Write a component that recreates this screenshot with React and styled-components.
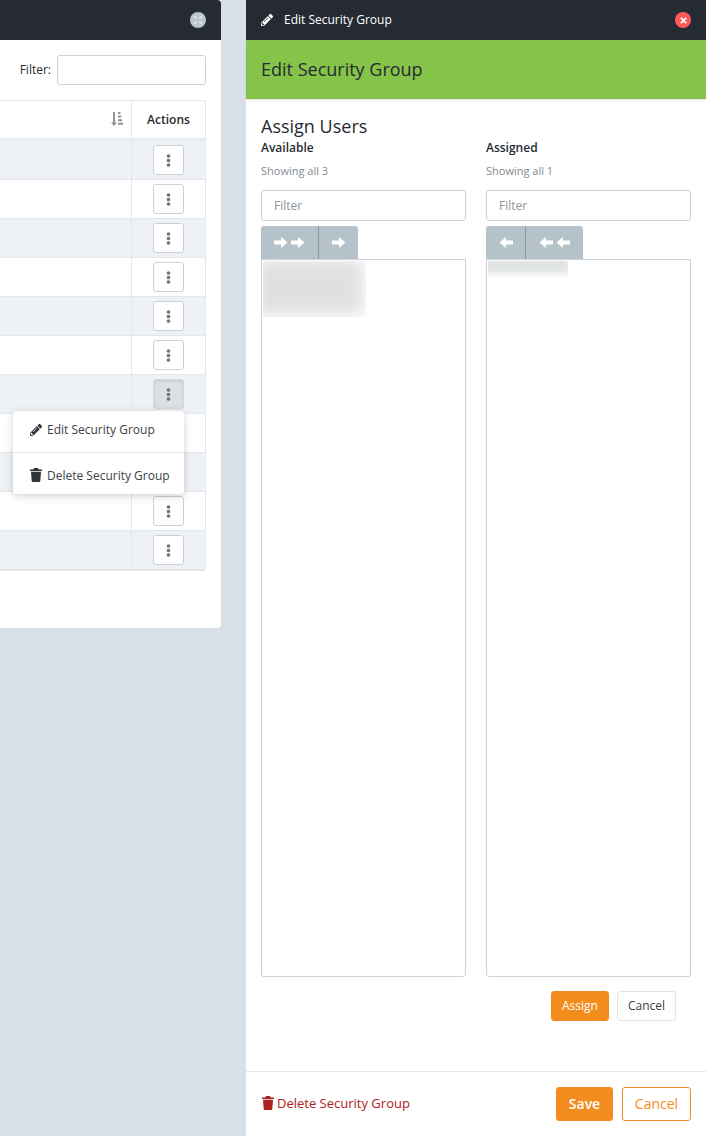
import styled, { createGlobalStyle } from "styled-components";
import { FaEllipsisV, FaPencilAlt, FaTimes } from "react-icons/fa";

const Global = createGlobalStyle`
html, body { margin:0; padding:0; height:100%; }
body {
    background:#d9e0e8;
    font-family:"Open Sans", "Liberation Sans", sans-serif;
    font-size:12px;
    color:#262b33;
    overflow:hidden;
}
* { box-sizing:border-box; }
`

const Page = styled.div`
display:flex;
align-items:flex-start;
gap:25px;
width:706px;
height:1136px;
`

const ListWindow = styled.div`
width:221px;
height:628px;
background:#fff;
border-radius:0 4px 4px 0;
`

const TitleBar = styled.div`
display:flex;
align-items:center;
justify-content:space-between;
height:40px;
padding:0 15px;
background:#262b33;
color:#fff;
font-size:12px;
`

const ListBar = styled(TitleBar)`
justify-content:flex-end;
border-radius:0 4px 0 0;
`

const TitleText = styled.div`
display:flex;
align-items:center;
gap:11px;
padding-bottom:1px;
svg { font-size:12px; }
`

const Dot = styled.span`
display:flex;
align-items:center;
justify-content:center;
width:16px;
height:16px;
border-radius:50%;
background:${p => p.$color};
color:${p => p.$mark};
font-size:9px;
`

const FilterRow = styled.div`
display:flex;
align-items:center;
justify-content:flex-end;
gap:6px;
height:60px;
padding:0 15px;
font-size:12px;
`

const FilterLabel = styled.span`
padding-bottom:2px;
`

const FilterInput = styled.input`
width:149px;
height:30px;
border:1px solid #cdd0d6;
border-radius:3px;
outline:none;
background:#fff;
`

const Table = styled.div`
position:relative;
width:206px;
border:1px solid #e3e7ec;
border-left:none;
border-radius:0 3px 3px 0;
`

const HeadRow = styled.div`
display:grid;
grid-template-columns:131px 74px;
height:40px;
border-bottom:3px solid #e8ebef;
`

const HeadCell = styled.div`
display:flex;
align-items:center;
justify-content:${p => p.$center ? "center" : "flex-end"};
padding-right:${p => p.$center ? "0" : "8px"};
padding-bottom:1px;
border-left:${p => p.$center ? "1px solid #e3e7ec" : "none"};
font-weight:600;
font-size:12px;
color:#262b33;
`

const Row = styled.div`
display:grid;
grid-template-columns:131px 74px;
height:39px;
background:${p => p.$odd ? "#eef1f5" : "#fff"};
border-bottom:1px solid #e3e7ec;
&:last-child { border-bottom:none; }
`

const ActionCell = styled.div`
display:flex;
align-items:center;
justify-content:center;
border-left:1px solid #e3e7ec;
`

const DotsButton = styled.button`
display:flex;
align-items:center;
justify-content:center;
width:31px;
height:30px;
padding:0;
border:1px solid ${p => p.$open ? "#d3d8de" : "#cdd0d6"};
border-radius:3px;
background:${p => p.$open ? "#dbe0e5" : "#fff"};
box-shadow:${p => p.$open ? "inset 0 1px 3px rgba(0,0,0,0.12)" : "none"};
color:#71757d;
font-size:13px;
`

const Menu = styled.div`
position:absolute;
left:13px;
top:310px;
width:171px;
background:#fff;
border-radius:4px;
box-shadow:0 2px 8px rgba(0,0,0,0.18);
`

const MenuItem = styled.div`
display:flex;
align-items:center;
gap:5px;
height:${p => p.$tall ? "42px" : "41px"};
padding:${p => p.$tall ? "3px 0 0 17px" : "0 0 4px 17px"};
font-size:12px;
color:#3b3f46;
border-top:${p => p.$line ? "1px solid #e3e7ec" : "none"};
svg { font-size:12px; color:#2f333a; }
`

const EditWindow = styled.div`
display:flex;
flex-direction:column;
width:460px;
height:1136px;
background:#fff;
`

const GreenBand = styled.div`
display:flex;
align-items:center;
height:59px;
padding:0 15px 1px;
background:#86c449;
font-size:18px;
color:#262b33;
box-shadow:0 1px 2px rgba(0,0,0,0.12);
`

const Body = styled.div`
flex:1;
padding:16px 15px 0;
`

const Heading = styled.div`
font-size:18px;
line-height:22px;
color:#262b33;
`

const Columns = styled.div`
display:grid;
grid-template-columns:205px 205px;
gap:20px;
margin-top:2px;
`

const ColLabel = styled.div`
font-size:12px;
font-weight:600;
line-height:18px;
`

const Showing = styled.div`
margin:5px 0 11px;
font-size:11px;
line-height:17px;
color:#858a91;
`

const PickFilter = styled.input`
display:block;
width:205px;
height:31px;
padding:0 12px;
border:1px solid #cdd0d6;
border-radius:3px;
outline:none;
font-family:inherit;
font-size:12px;
&::placeholder { color:#8f9297; opacity:1; }
`

const MoveGroup = styled.div`
display:flex;
width:max-content;
height:33px;
margin-top:5px;
background:#b5c2ca;
border-radius:3px 3px 0 0;
`

const MoveButton = styled.div`
display:flex;
align-items:center;
justify-content:center;
gap:3px;
width:${p => p.$w}px;
padding-bottom:1px;
color:#fff;
& + & { border-left:1px solid #8a98a1; }
`

const PickList = styled.div`
position:relative;
height:718px;
border:1px solid #cdd0d6;
border-radius:0 0 3px 3px;
overflow:hidden;
`

const Blurred = styled.div`
position:absolute;
left:1px;
top:1px;
width:${p => p.$w}px;
height:${p => p.$h}px;
overflow:hidden;
`

const Smudge = styled.div`
position:absolute;
left:-8px;
top:${p => p.$y}px;
width:${p => p.$w}px;
height:${p => p.$h}px;
background:${p => p.$color};
filter:blur(${p => p.$blur}px);
`

const AssignRow = styled.div`
display:flex;
justify-content:flex-end;
gap:8px;
margin-top:14px;
padding-right:15px;
`

const SmallButton = styled.button`
height:30px;
width:${p => p.$w}px;
padding:0 0 1px;
border:1px solid ${p => p.$primary ? "#f28c1c" : "#e2e4e8"};
border-radius:3px;
background:${p => p.$primary ? "#f28c1c" : "#fff"};
color:${p => p.$primary ? "#fff" : "#3b3f46"};
font-family:inherit;
font-size:12px;
`

const Footer = styled.div`
display:flex;
align-items:center;
justify-content:space-between;
height:65px;
padding:0 15px;
border-top:1px solid #e6e8eb;
`

const DeleteLink = styled.div`
display:flex;
align-items:center;
gap:3px;
padding:0 0 2px 1px;
font-size:13px;
color:#ad2121;
`

const FooterActions = styled.div`
display:flex;
gap:9px;
`

const BigButton = styled.button`
height:34px;
width:${p => p.$w}px;
padding:0 0 1px;
border:1px solid #f28c1c;
border-radius:3px;
background:${p => p.$primary ? "#f28c1c" : "#fff"};
color:${p => p.$primary ? "#fff" : "#f28c1c"};
font-family:inherit;
font-size:14px;
font-weight:${p => p.$primary ? 600 : 400};
`

// the fat font-awesome 4 arrow, the icon packages only have the thin one
const Arrow = ({ left }) => (
    <svg width="14" height="11" viewBox="0 0 14 11" fill="#fff">
        <path d={left ? "M14 3.5H7V0L.5 5.5 7 11V7.5h7z" : "M0 3.5h7V0l6.5 5.5L7 11V7.5H0z"} />
    </svg>
)

const Trash = ({ size = 12 }) => (
    <svg width={size} height={size * 14 / 12} viewBox="0 0 12 14" fill="currentColor">
        <path d="M4 0h4l.7 1.4H12V3H0V1.4h3.3zM1 3.8h10l-.7 9.1q-.1 1.1-1.1 1.1H2.8q-1 0-1.1-1.1z" />
    </svg>
)

const SortIcon = () => (
    <svg width="12" height="14" viewBox="0 0 12 14" fill="#8f949b">
        <path d="M2 0h2v10.5h2L3 14 0 10.5h2zM7 0h2.5v2H7zM7 3.6h3.2v2H7zM7 7.2h4v2H7zM7 10.8h5v2H7z" />
    </svg>
)

const ExpandX = () => (
    <svg width="10" height="10" viewBox="0 0 10 10" stroke="#e4e9ec" strokeWidth="1.6" fill="none">
        <path d="M1 1l2.5 2.5M9 1L6.5 3.5M1 9l2.5-2.5M9 9L6.5 6.5" />
    </svg>
)

const rows = [0, 1, 2, 3, 4, 5, 6, 7, 8, 9, 10];

const App = () => {
    return (
        <Page>
            <Global />
            <ListWindow>
                <ListBar>
                    <Dot $color="#b9c6cd" $mark="#e4e9ec"><ExpandX /></Dot>
                </ListBar>
                <FilterRow>
                    <FilterLabel>Filter:</FilterLabel>
                    <FilterInput />
                </FilterRow>
                <Table>
                    <HeadRow>
                        <HeadCell><SortIcon /></HeadCell>
                        <HeadCell $center>Actions</HeadCell>
                    </HeadRow>
                    {rows.map(i => (
                        <Row key={i} $odd={i % 2 === 0}>
                            <div />
                            <ActionCell>
                                <DotsButton $open={i === 6}><FaEllipsisV /></DotsButton>
                            </ActionCell>
                        </Row>
                    ))}
                    <Menu>
                        <MenuItem><FaPencilAlt />Edit Security Group</MenuItem>
                        <MenuItem $line $tall><Trash />Delete Security Group</MenuItem>
                    </Menu>
                </Table>
            </ListWindow>
            <EditWindow>
                <TitleBar>
                    <TitleText><FaPencilAlt />Edit Security Group</TitleText>
                    <Dot $color="#ff5a5a" $mark="#fff"><FaTimes /></Dot>
                </TitleBar>
                <GreenBand>Edit Security Group</GreenBand>
                <Body>
                    <Heading>Assign Users</Heading>
                    <Columns>
                        <div>
                            <ColLabel>Available</ColLabel>
                            <Showing>Showing all 3</Showing>
                            <PickFilter placeholder="Filter" />
                            <MoveGroup>
                                <MoveButton $w={57}><Arrow /><Arrow /></MoveButton>
                                <MoveButton $w={40}><Arrow /></MoveButton>
                            </MoveGroup>
                            <PickList>
                                <Blurred $w={103} $h={56}>
                                    <Smudge $y={-2} $w={108} $h={56} $color="#e0e0e0" $blur={8} />
                                </Blurred>
                            </PickList>
                        </div>
                        <div>
                            <ColLabel>Assigned</ColLabel>
                            <Showing>Showing all 1</Showing>
                            <PickFilter placeholder="Filter" />
                            <MoveGroup>
                                <MoveButton $w={39}><Arrow left /></MoveButton>
                                <MoveButton $w={58}><Arrow left /><Arrow left /></MoveButton>
                            </MoveGroup>
                            <PickList>
                                <Blurred $w={80} $h={16}>
                                    <Smudge $y={-3} $w={90} $h={15} $color="#dcdfdf" $blur={4} />
                                </Blurred>
                            </PickList>
                        </div>
                    </Columns>
                    <AssignRow>
                        <SmallButton $primary $w={58}>Assign</SmallButton>
                        <SmallButton $w={59}>Cancel</SmallButton>
                    </AssignRow>
                </Body>
                <Footer>
                    <DeleteLink><Trash />Delete Security Group</DeleteLink>
                    <FooterActions>
                        <BigButton $primary $w={57}>Save</BigButton>
                        <BigButton $w={69}>Cancel</BigButton>
                    </FooterActions>
                </Footer>
            </EditWindow>
        </Page>
    )
}

export default App
